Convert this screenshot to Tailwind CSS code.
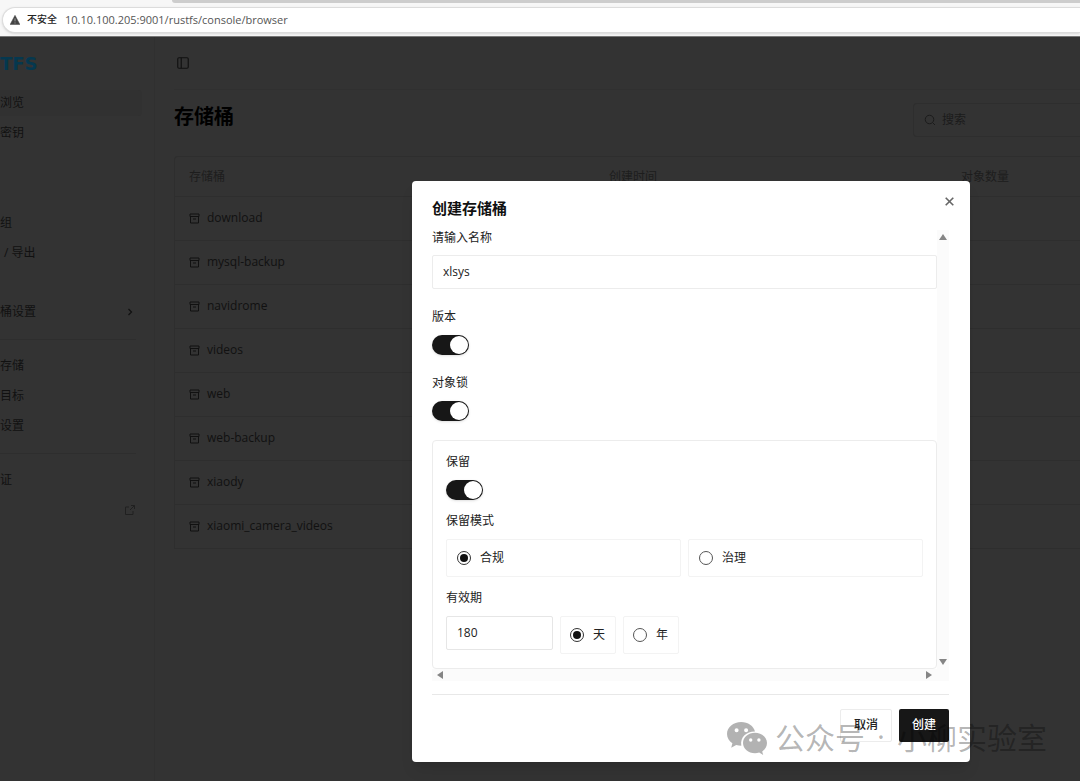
<!DOCTYPE html>
<html lang="zh-CN">

<head>
  <meta charset="UTF-8" />
  <meta name="viewport" content="width=device-width, initial-scale=1.0" />
  <title>RustFS Console</title>
  <script src="https://cdn.jsdelivr.net/npm/@tailwindcss/browser@4"></script>
</head>

<body class="relative flex h-screen flex-col overflow-hidden bg-[#333333] font-['Open_Sans','Noto_Sans_CJK_SC',sans-serif] text-xs text-[#111111]">

  <!-- browser address bar -->
  <div class="relative h-[37px] shrink-0 border-b border-[#777777] bg-[#f7f7f7] pt-[7px] pl-[2px]">
    <div class="absolute top-0 right-0 left-[172px] h-[3px] rounded-bl-lg bg-[#cdcdcd]"></div>
    <div class="flex h-[26px] items-center rounded-l-full border border-r-0 border-[#dcdcdc] bg-white pl-[7px] text-[#555555] shadow-sm">
      <svg class="mr-[7px] size-[10px]" viewBox="0 0 10 10">
        <path d="M5 0.3 9.9 9.6H0.1Z" fill="#444444" stroke="#444444" stroke-width="0.5" stroke-linejoin="round" />
        <path d="M5 3.4v3M5 7.4v1.1" stroke="#999999" stroke-width="1" />
      </svg>
      <span class="mr-2 text-[10px] font-medium text-[#222222]">不安全</span>
      <span class="text-[11px]">10.10.100.205:9001/rustfs/console/browser</span>
    </div>
  </div>

  <div class="flex min-h-0 flex-1">
    <!-- sidebar -->
    <aside class="w-[155px] shrink-0 border-r border-[#303030] pt-4">
      <div class="mb-4 h-[21px] font-['DejaVu_Sans'] text-lg leading-[21px] font-bold text-[#05384f]">TFS</div>
      <nav class="flex flex-col gap-1">
        <a href="#" class="mr-3 flex h-[26px] items-center rounded-r bg-[#313131]">浏览</a>
        <a href="#" class="flex h-[26px] items-center">密钥</a>
        <a href="#" class="mt-[60px] flex h-[26px] items-center">组</a>
        <a href="#" class="flex h-[26px] items-center pl-1">/ 导出</a>
        <a href="#" class="mt-[29px] mr-[18px] flex h-[26px] items-center justify-between">
          桶设置
          <svg class="size-3" viewBox="0 0 24 24" fill="none" stroke="currentColor" stroke-width="2.5"><path d="m9 18 6-6-6-6" /></svg>
        </a>
        <hr class="mt-[10px] mr-[18px] mb-[9px] border-[#2e2e2e]" />
        <a href="#" class="flex h-[26px] items-center">存储</a>
        <a href="#" class="flex h-[26px] items-center">目标</a>
        <a href="#" class="flex h-[26px] items-center">设置</a>
        <hr class="mt-[10px] mr-[18px] mb-[9px] border-[#2e2e2e]" />
        <a href="#" class="flex h-[26px] items-center">证</a>
        <a href="#" aria-label="文档" class="mr-[18px] flex h-[26px] items-center justify-end">
          <svg class="size-3 text-[#202020]" viewBox="0 0 24 24" fill="none" stroke="currentColor" stroke-width="2"><path d="M14 3h7v7M21 3l-9 9M18 14v7H3V6h7" /></svg>
        </a>
      </nav>
    </aside>

    <!-- bucket list -->
    <main class="min-w-0 flex-1 pl-[19px]">
      <header class="flex h-[53px] items-center border-b border-[#303030] pl-[2px]">
        <button aria-label="切换侧边栏">
          <svg class="size-[14px]" viewBox="0 0 24 24" fill="none" stroke="currentColor" stroke-width="2"><rect x="3" y="3" width="18" height="18" rx="2" /><path d="M9 3v18" /></svg>
        </button>
      </header>
      <div class="flex h-[66px] justify-between pt-[13px]">
        <h1 class="h-7 text-xl leading-7 font-bold text-black">存储桶</h1>
        <label class="flex h-[34px] w-[167px] items-center gap-[6px] rounded-l-sm border border-r-0 border-[#2e2e2e] pl-[10px]">
          <svg class="size-3 shrink-0 text-[#1b1b1b]" viewBox="0 0 24 24" fill="none" stroke="currentColor" stroke-width="2"><circle cx="11" cy="11" r="8.5" /><path d="m22 22-5-5" /></svg>
          <input type="text" placeholder="搜索" aria-label="搜索" class="w-full min-w-0 outline-none placeholder:text-[#1b1b1b]" />
        </label>
      </div>
      <table class="w-full table-fixed border-separate border-spacing-0 rounded-tl-sm border-t border-l border-[#2e2e2e] text-left">
        <thead>
          <tr class="h-10 text-[#1d1d1d]">
            <th class="w-[420px] border-b border-[#2e2e2e] pl-[14px] font-normal">存储桶</th>
            <th class="w-[352px] border-b border-[#2e2e2e] pl-[14px] font-normal">创建时间</th>
            <th class="border-b border-[#2e2e2e] pl-[14px] font-normal">对象数量</th>
          </tr>
        </thead>
        <tbody id="buckets"></tbody>
      </table>
    </main>
  </div>

  <!-- create bucket dialog -->
  <div class="absolute inset-x-0 top-[181px] pr-[110px] pl-[412px]">
    <div role="dialog" aria-labelledby="dialog-title" class="relative rounded-[4px] bg-white pt-[17px] pr-[21px] pb-5 pl-5 text-[#222222] shadow-lg">
      <button aria-label="关闭" class="absolute top-[14px] right-[14px] text-[#666666]">
        <svg class="size-[13px]" viewBox="0 0 24 24" fill="none" stroke="currentColor" stroke-width="3"><path d="M5 5l14 14M19 5 5 19" /></svg>
      </button>
      <h2 id="dialog-title" class="mb-3 h-5 text-[15px] leading-5 font-bold text-[#111111]">创建存储桶</h2>

      <div class="grid grid-cols-[1fr_12px] grid-rows-[1fr_12px]">
        <form id="bucket-form" class="leading-4">
          <label for="name" class="block h-4">请输入名称</label>
          <input id="name" type="text" value="xlsys" class="mt-[9px] block h-[34px] w-full rounded-xs border border-[#ececec] px-[10px] pb-[2px] outline-none" />

          <label for="version" class="mt-5 block h-4">版本</label>
          <input id="version" type="checkbox" role="switch" checked class="mt-[10px] flex h-5 w-[37px] appearance-none items-center justify-end rounded-full bg-[#171717] px-px shadow-sm before:size-[18px] before:rounded-full before:bg-white" />

          <label for="lock" class="mt-5 block h-4">对象锁</label>
          <input id="lock" type="checkbox" role="switch" checked class="mt-[10px] flex h-5 w-[37px] appearance-none items-center justify-end rounded-full bg-[#171717] px-px shadow-sm before:size-[18px] before:rounded-full before:bg-white" />

          <div class="mt-[19px] rounded-[4px] border border-[#ececec] px-[13px] pt-[13px] pb-[14px]">
            <label for="retention" class="block h-4">保留</label>
            <input id="retention" type="checkbox" role="switch" checked class="mt-[10px] flex h-5 w-[37px] appearance-none items-center justify-end rounded-full bg-[#171717] px-px shadow-sm before:size-[18px] before:rounded-full before:bg-white" />

            <div class="mt-[13px] h-4">保留模式</div>
            <div class="mt-[10px] grid grid-cols-2 gap-[7px]">
              <label class="flex h-[38px] items-center gap-[9px] rounded-xs border border-[#f3f3f3] pl-[10px]">
                <input type="radio" name="mode" checked class="grid size-[14px] appearance-none place-items-center rounded-full border border-[#333333] checked:before:size-2 checked:before:rounded-full checked:before:bg-[#111111]" />
                合规
              </label>
              <label class="flex h-[38px] items-center gap-[9px] rounded-xs border border-[#f3f3f3] pl-[10px]">
                <input type="radio" name="mode" class="grid size-[14px] appearance-none place-items-center rounded-full border border-[#555555] checked:before:size-2 checked:before:rounded-full checked:before:bg-[#111111]" />
                治理
              </label>
            </div>

            <label for="period" class="mt-[13px] block h-4">有效期</label>
            <div class="mt-[10px] flex gap-[7px]">
              <input id="period" type="text" value="180" class="h-[34px] w-[107px] rounded-xs border border-[#e6e6e6] px-[10px] pb-[2px] outline-none" />
              <label class="flex h-[38px] w-[56px] items-center gap-[9px] rounded-xs border border-[#f3f3f3] pl-[9px]">
                <input type="radio" name="unit" checked class="grid size-[14px] appearance-none place-items-center rounded-full border border-[#333333] checked:before:size-2 checked:before:rounded-full checked:before:bg-[#111111]" />
                天
              </label>
              <label class="flex h-[38px] w-[56px] items-center gap-[9px] rounded-xs border border-[#f3f3f3] pl-[9px]">
                <input type="radio" name="unit" class="grid size-[14px] appearance-none place-items-center rounded-full border border-[#555555] checked:before:size-2 checked:before:rounded-full checked:before:bg-[#111111]" />
                年
              </label>
            </div>
          </div>
        </form>
        <!-- scroll bars -->
        <div class="flex flex-col items-center justify-between bg-[#fbfbfb] py-1">
          <svg class="h-[6px] w-2" viewBox="0 0 8 6" fill="#858585"><path d="M4 0 8 6H0Z" /></svg>
          <svg class="h-[6px] w-2" viewBox="0 0 8 6" fill="#858585"><path d="M4 6 8 0H0Z" /></svg>
        </div>
        <div class="flex items-center justify-between bg-[#fbfbfb] px-[5px]">
          <svg class="h-2 w-[6px]" viewBox="0 0 6 8" fill="#858585"><path d="M0 4 6 0V8Z" /></svg>
          <svg class="h-2 w-[6px]" viewBox="0 0 6 8" fill="#858585"><path d="M6 4 0 0V8Z" /></svg>
        </div>
        <div class="bg-[#fbfbfb]"></div>
      </div>

      <div class="mt-[13px] flex justify-end gap-[7px] border-t border-[#e8e8e8] pt-[14px]">
        <button class="h-[33px] w-[52px] rounded-xs border border-[#ececec] pb-[2px] font-medium">取消</button>
        <button form="bucket-form" class="h-[33px] w-[50px] rounded-xs bg-[#171717] pb-[2px] font-medium text-white">创建</button>
      </div>
    </div>
  </div>

  <!-- watermark -->
  <div class="pointer-events-none absolute right-[33px] bottom-[22px] flex items-center gap-2 text-black/30">
    <svg class="h-10 w-10" viewBox="0 0 40 40" fill="currentColor">
      <path fill-rule="evenodd" d="M14.2 4C6.400 4 0 9.300 0 15.900c0 3.800 2.100 7.100 5.400 9.300L4.200 29.700l5-2.700c1.800.5 3.500.8 5.100.8-1.400-9.200 5.700-14.500 13.700-14.300C26.700 8 21 4 14.200 4ZM9.600 10.300a2 2 0 1 1 0 4 2 2 0 0 1 0-4Zm9.500 0a2 2 0 1 1 0 4 2 2 0 0 1 0-4Z" />
      <path fill-rule="evenodd" d="M28 14.800c-6.700 0-12 4.500-12 10.200s5.300 10.200 12 10.200c1.500 0 2.900-.2 4.200-.6l4 2.500-1-3.700c3-1.900 4.800-5 4.800-8.400 0-5.700-5.300-10.200-12-10.200Zm-4.300 5.500a1.700 1.700 0 1 1 0 3.400 1.700 1.700 0 0 1 0-3.400Zm8.200 0a1.700 1.700 0 1 1 0 3.400 1.700 1.700 0 0 1 0-3.400Z" />
    </svg>
    <span class="flex pb-[3px] font-['Noto_Sans_CJK_SC',sans-serif] text-[30px] leading-10 whitespace-nowrap">公众号<span class="w-8 text-center font-['Open_Sans',sans-serif]">·</span>小柳实验室</span>
  </div>

  <script>
    const buckets = ["download", "mysql-backup", "navidrome", "videos", "web", "web-backup", "xiaody", "xiaomi_camera_videos"];

    document.getElementById("buckets").innerHTML = buckets.map(name => `
      <tr class="h-11">
        <td class="border-b border-[#2e2e2e] pb-[2px] pl-[14px]">
          <a href="#" class="flex items-center gap-[7px]">
            <svg class="mt-[2px] size-[11px]" viewBox="0 0 22 22" fill="none" stroke="currentColor" stroke-width="2"><path d="M2 2h18v5H2zM3 7v13h16V7M8 12h6" /></svg>
            ${name}
          </a>
        </td>
        <td class="border-b border-[#2e2e2e]"></td>
        <td class="border-b border-[#2e2e2e]"></td>
      </tr>`).join("");
  </script>
</body>

</html>
